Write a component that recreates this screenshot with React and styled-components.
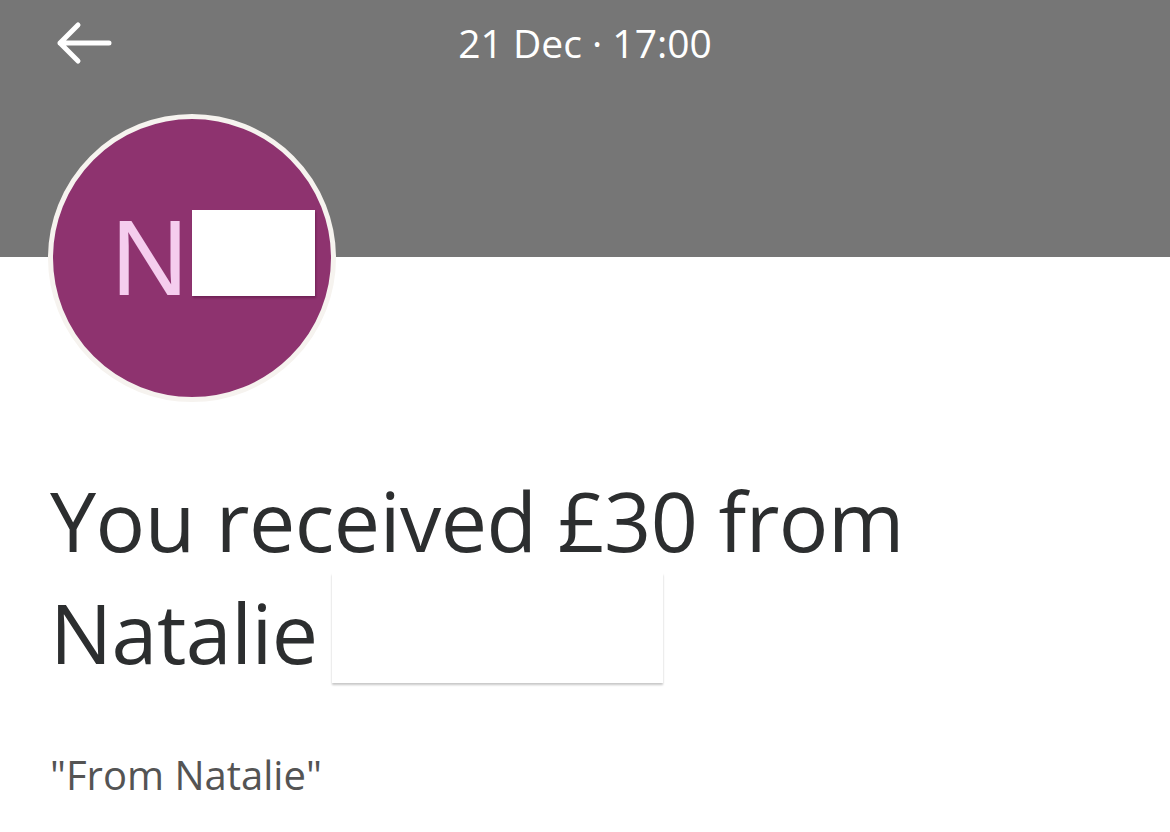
import React from 'react';
import styled, { createGlobalStyle } from 'styled-components';

const GlobalStyle = createGlobalStyle`
  html, body {
    margin: 0;
    padding: 0;
    background: #ffffff;
    font-family: "Open Sans", "Noto Sans", sans-serif;
  }
`;

const Page = styled.div`
  width: 1170px;
  height: 832px;
  overflow: hidden;
  background: #fff;
`;

const Header = styled.header`
  background: #767676;
  height: 257px;
  position: relative;
`;

const TopBar = styled.div`
  display: grid;
  grid-template-columns: 170px 1fr 170px;
  align-items: center;
  height: 86px;
  padding: 0 0 0 56px;
`;

const BackButton = styled.button`
  border: none;
  background: none;
  padding: 0;
  width: 58px;
  height: 46px;
  display: flex;
  align-items: center;
  cursor: pointer;
`;

const DateText = styled.div`
  text-align: center;
  color: #fff;
  font-size: 39px;
  margin-left: -56px;
  margin-top: -2px;
`;

const Avatar = styled.div`
  position: absolute;
  left: 48px;
  top: 114px;
  width: 288px;
  height: 288px;
  box-sizing: border-box;
  border-radius: 50%;
  background: #8e336f;
  border: 5px solid #f6f3ef;
  display: flex;
  align-items: center;
  justify-content: flex-start;
  padding-left: 58px;
`;

const Initial = styled.span`
  color: #f5cdee;
  font-family: "Liberation Sans", Arial, sans-serif;
  font-size: 107px;
  line-height: 1;
  margin-top: 0px;
`;

const Redact = styled.span`
  display: inline-block;
  flex-shrink: 0;
  background: #fff;
  width: ${({ w }) => w}px;
  height: ${({ h }) => h}px;
  box-shadow: 0 2px 2px rgba(0, 0, 0, 0.22);
`;

const AvatarRedact = styled(Redact)`
  margin-left: 4px;
  margin-top: -10px;
  box-shadow: 1px 2px 2px rgba(60, 0, 40, 0.35);
`;

const Body = styled.main`
  padding: 207px 0 0 50px;
`;

const Title = styled.h1`
  margin: 0;
  font-weight: 400;
  font-size: 82.5px;
  line-height: 112px;
  color: #2c2e2f;
  letter-spacing: -0.5px;
`;

const NameLine = styled.span`
  display: inline-flex;
  align-items: flex-start;
`;

const TitleRedact = styled(Redact)`
  margin-left: 14px;
  margin-top: -3px;
`;

const Note = styled.p`
  margin: 59px 0 0 0;
  font-size: 40px;
  color: #545454;
`;

const BackArrow = () => (
  <svg width="56" height="44" viewBox="0 0 56 44" fill="none">
    <path d="M4 22H53M4 22L22 4M4 22L22 40" stroke="#fff" strokeWidth="5" strokeLinecap="round" strokeLinejoin="round" />
  </svg>
);

export default function App() {
  return (
    <Page>
      <GlobalStyle />
      <Header>
        <TopBar>
          <BackButton aria-label="Back">
            <BackArrow />
          </BackButton>
          <DateText>21 Dec · 17:00</DateText>
          <div />
        </TopBar>
        <Avatar>
          <Initial>N</Initial>
          <AvatarRedact w={123} h={86} />
        </Avatar>
      </Header>
      <Body>
        <Title>
          You received £30 from
          <br />
          <NameLine>
            Natalie
            <TitleRedact w={331} h={110} />
          </NameLine>
        </Title>
        <Note>"From Natalie"</Note>
      </Body>
    </Page>
  );
}
